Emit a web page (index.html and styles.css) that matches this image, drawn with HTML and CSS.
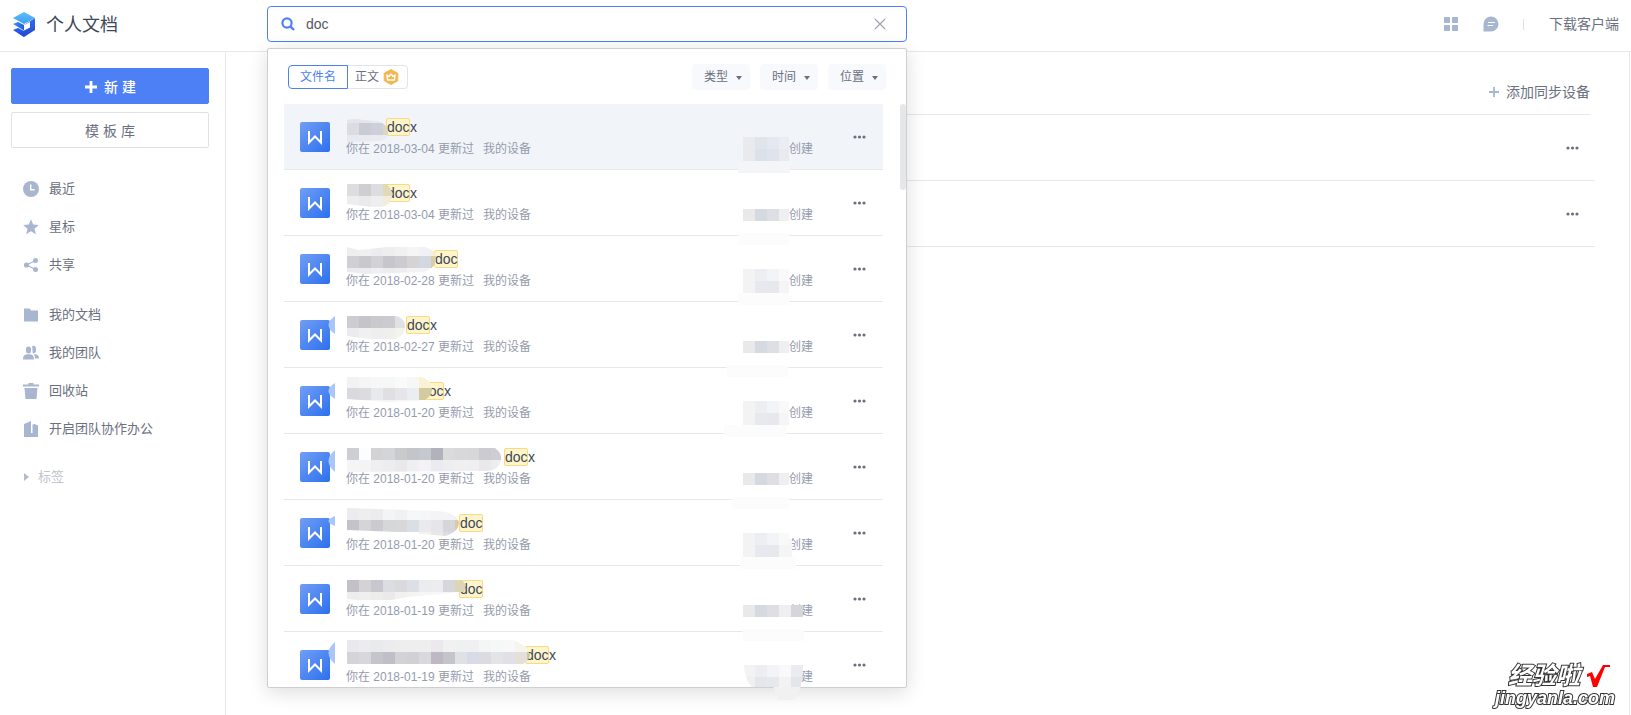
FILE: index.html
```html
<!DOCTYPE html>
<html lang="zh-CN">
<head>
<meta charset="utf-8">
<meta name="viewport" content="width=device-width, initial-scale=1">
<title>个人文档</title>
<link rel="stylesheet" href="styles.css">
</head>
<body>
<header class="header">
  <a class="brand" href="#">
    <svg class="brand-logo" viewBox="0 0 24 26" aria-hidden="true">
      <defs>
        <linearGradient id="g-top" x1="0" y1="0" x2="0" y2="1"><stop offset="0" stop-color="#5cc0fd"/><stop offset="1" stop-color="#3d9cf5"/></linearGradient>
        <linearGradient id="g-side" x1="0" y1="0" x2="0" y2="1"><stop offset="0" stop-color="#3469f5"/><stop offset="1" stop-color="#2348cf"/></linearGradient>
        <linearGradient id="g-mid" x1="0" y1="0" x2="1" y2="0"><stop offset="0" stop-color="#3f93fa"/><stop offset="1" stop-color="#1c5be8"/></linearGradient>
      </defs>
      <path d="M1 19l5-2 6 3v6z" fill="#2458f0"/>
      <path d="M12 14l11-7v12l-11 7-6-4 6-2z" fill="url(#g-side)"/>
      <path d="M1 13l5-2 6 3v5.500z" fill="url(#g-mid)"/>
      <path d="M1 7l11-6 11 6-11 6z" fill="url(#g-top)"/>
      <path d="M12 14l6-3v5.500l-6 3z" fill="#fff"/>
    </svg>
    <span class="brand-name">个人文档</span>
  </a>
  <div class="search">
    <form class="search-box" role="search">
      <svg class="search-icon" viewBox="0 0 14 14" aria-hidden="true"><circle cx="6" cy="6" r="4.600" fill="none" stroke="#4d80f4" stroke-width="2.200"/><path d="M9.300 9.300L13 13" stroke="#4d80f4" stroke-width="2.400"/></svg>
      <input class="search-input" type="text" value="doc" aria-label="搜索文档">
      <button class="icon-button" type="button" aria-label="清除">
        <svg class="clear-icon" viewBox="0 0 12 12"><path d="M1 1l10 10M11 1L1 11" stroke="#9a9fab" stroke-width="1.100"/></svg>
      </button>
    </form>
    <section class="panel" aria-label="搜索结果">
      <div class="panel-bar">
        <div class="tabs">
          <button class="tab tab-active" type="button">文件名</button>
          <button class="tab" type="button">正文
            <svg class="crown" viewBox="0 0 16 16" aria-hidden="true"><path d="M8 .5l6.800 3.800v7.400L8 15.500l-6.800-3.800V4.300z" fill="#f3b750" stroke="#f3b750" stroke-linejoin="round"/><path d="M3.800 6l2.200 1.600L8 5l2 2.600L12.200 6l-.8 5H4.600z" fill="none" stroke="#fff" stroke-width="1.300" stroke-linejoin="round"/></svg>
          </button>
        </div>
        <div class="filters">
          <span class="filter"><select aria-label="类型"><option>类型</option></select></span>
          <span class="filter"><select aria-label="时间"><option>时间</option></select></span>
          <span class="filter"><select aria-label="位置"><option>位置</option></select></span>
        </div>
      </div>
      <div class="results-view">
        <ul class="results" id="results"></ul>
        <span class="scroll-thumb"></span>
      </div>
      <svg class="panel-smudge" viewBox="0 0 28 14" aria-hidden="true"><path d="M0 0h28l-4 11q-2 3-5 3H5z" fill="#f1f1f1"/></svg>
    </section>
  </div>
  <div class="header-tools">
    <button class="icon-button" type="button" aria-label="应用">
      <svg class="tool-icon" viewBox="0 0 16 16" fill="#a8b6d0"><rect x="1" y="1" width="6" height="6" rx=".6"/><rect x="9" y="1" width="6" height="6" rx=".6"/><rect x="1" y="9" width="6" height="6" rx=".6"/><rect x="9" y="9" width="6" height="6" rx=".6"/></svg>
    </button>
    <button class="icon-button" type="button" aria-label="消息">
      <svg class="tool-icon" viewBox="0 0 16 16"><path d="M8 .5A7.500 7.500 0 1 1 8 15.500H.5V8A7.500 7.500 0 0 1 8 .5z" fill="#a8b6d0"/><path d="M5 6.500h7M4.500 9.500h5.500" stroke="#fff" stroke-width="1.200"/></svg>
    </button>
    <span class="divider"></span>
    <a class="download" href="#">下载客户端</a>
  </div>
</header>
<div class="body">
  <aside class="sidebar">
    <button class="side-button side-primary" type="button">
      <svg class="plus" viewBox="0 0 14 14" aria-hidden="true"><path d="M7 1v12M1 7h12" stroke="#fff" stroke-width="2.800"/></svg>
      新 建
    </button>
    <button class="side-button" type="button">模 板 库</button>
    <nav class="nav">
      <ul class="nav-group">
        <li><a class="nav-link" href="#"><svg viewBox="0 0 16 16"><circle cx="8" cy="8" r="8"/><path d="M7.700 3.500v5.200h4" fill="none" stroke="#fff" stroke-width="1.500"/></svg>最近</a></li>
        <li><a class="nav-link" href="#"><svg viewBox="0 0 16 16"><path d="M8 .3l2.200 5.300 5.600.4-4.300 3.700 1.400 5.600L8 12.300l-4.900 3 1.400-5.600L.2 6l5.600-.4z"/></svg>星标</a></li>
        <li><a class="nav-link" href="#"><svg viewBox="0 0 16 16"><circle cx="3.500" cy="8" r="2.600"/><circle cx="12.500" cy="3.500" r="2.500"/><circle cx="12.500" cy="12.500" r="2.500"/><path d="M12.500 3.500L3.500 8l9 4.500" fill="none" stroke="#a8b6d0" stroke-width="1.200"/></svg>共享</a></li>
      </ul>
      <ul class="nav-group">
        <li><a class="nav-link" href="#"><svg viewBox="0 0 16 16"><path d="M1 1.500h5.500L8 3.500h7v11H1z"/></svg>我的文档</a></li>
        <li><a class="nav-link" href="#"><svg viewBox="0 0 16 16"><rect x="3" y="1.500" width="5" height="7" rx="2.500"/><path d="M9 1.300c1-1 4-.6 4 2.200v2c0 2-1.500 3.200-3.200 2.700C9.300 7 9.800 3 9 1.300z"/><path d="M0 14.500c0-4 2-5.200 5.500-5.200S11 10.500 11 14.500zM10.500 9.300c3.500-.3 5.500 1 5.500 4.200h-4c0-2-.3-3-1.500-4.200z"/></svg>我的团队</a></li>
        <li><a class="nav-link" href="#"><svg viewBox="0 0 16 16"><path d="M5.500 0h5v1.500H16v2H0v-2h5.500zM1.500 5h13l-1 11h-11z"/></svg>回收站</a></li>
        <li><a class="nav-link" href="#"><svg viewBox="0 0 16 16"><path d="M1 3l7-3v12h1.500V3.500L11 3.200v-.5l4 1.800V16H1z"/></svg>开启团队协作办公</a></li>
      </ul>
      <a class="nav-tags" href="#"><svg viewBox="0 0 6 10" aria-hidden="true"><path d="M0 1l5 4-5 4z"/></svg>标签</a>
    </nav>
  </aside>
  <main class="main">
    <div class="main-bar">
      <button class="add-device" type="button"><svg viewBox="0 0 12 12" aria-hidden="true"><path d="M6 1v10M1 6h10" stroke="#a8b6d0" stroke-width="1.800"/></svg>添加同步设备</button>
    </div>
    <ul class="devices">
      <li class="device"><button class="icon-button" type="button" aria-label="更多"><svg class="dots" viewBox="0 0 14 4"><circle cx="2" cy="2" r="1.600"/><circle cx="6.500" cy="2" r="1.600"/><circle cx="11" cy="2" r="1.600"/></svg></button></li>
      <li class="device"><button class="icon-button" type="button" aria-label="更多"><svg class="dots" viewBox="0 0 14 4"><circle cx="2" cy="2" r="1.600"/><circle cx="6.500" cy="2" r="1.600"/><circle cx="11" cy="2" r="1.600"/></svg></button></li>
    </ul>
  </main>
</div>
<div class="watermark">
  <div class="watermark-top"><span>经验啦</span><svg viewBox="0 0 24 24" aria-hidden="true"><path d="M1 10l5-2 3 7L17 1h7v2h-5L11 23H7L4 12l-3 1z" fill="#f00"/></svg></div>
  <div class="watermark-url">jingyanla.com</div>
</div>
<script src="app.js"></script>
</body>
</html>
```
FILE: styles.css
```css
* { box-sizing: border-box; }

body {
  margin: 0;
  min-height: 100vh;
  display: flex;
  flex-direction: column;
  background: #fff;
  color: #6a7080;
  font: 14px/18px "Liberation Sans", "Noto Sans CJK SC", sans-serif;
  overflow: hidden;
}

button, input, select { font: inherit; color: inherit; }
ul { list-style: none; margin: 0; padding: 0; }
a { color: inherit; text-decoration: none; }
svg { display: block; flex: none; }

.icon-button {
  display: flex;
  padding: 0;
  border: 0;
  background: none;
}

/* Header */
.header {
  display: flex;
  height: 52px;
  border-bottom: 1px solid #e7e8ea;
}

.brand {
  display: flex;
  flex: none;
  align-items: center;
  gap: 10px;
  width: 267px;
  padding: 0 0 3px 12px;
}
.brand-logo { width: 24px; height: 26px; }
.brand-name { padding-top: 2px; color: #3d4757; font-size: 18px; line-height: 24px; }

.search {
  position: relative;
  flex: 0 1 640px;
  padding-top: 6px;
}
.search-box {
  display: flex;
  align-items: center;
  height: 36px;
  padding: 0 20px 0 13px;
  border: 1px solid #4d80f4;
  border-radius: 4px;
}
.search-icon { width: 14px; height: 14px; }
.search-input {
  flex: 1;
  min-width: 0;
  padding: 0 0 0 11px;
  border: 0;
  outline: 0;
  background: none;
  color: #555a64;
}
.clear-icon { width: 12px; height: 12px; }

.header-tools {
  display: flex;
  align-items: center;
  gap: 24px;
  margin-left: auto;
  padding: 0 12px 3px 0;
}
.tool-icon { width: 16px; height: 16px; }
.divider { width: 1px; height: 11px; margin-right: 1px; background: #dde2ea; }
.download { line-height: 20px; }

/* Search panel */
.panel {
  position: absolute;
  z-index: 2;
  top: 48px;
  left: 0;
  right: 0;
  background: #fff;
  border: 1px solid #cfcfd1;
  border-radius: 2px;
  box-shadow: 0 4px 20px rgba(0, 0, 0, .14);
}
.panel-bar {
  display: flex;
  justify-content: space-between;
  align-items: center;
  height: 55px;
  padding: 0 20px;
  font-size: 12px;
}
.tabs, .filters { display: flex; }
.tab {
  display: flex;
  align-items: center;
  gap: 4px;
  height: 24px;
  padding: 0 8px 0 7px;
  border: 1px solid #e3e4e6;
  border-left: 0;
  border-radius: 0 4px 4px 0;
  background: #fff;
}
.tab-active {
  padding: 0 11px;
  border: 1px solid #4d80f4;
  border-radius: 4px 0 0 4px;
  color: #4d80f4;
}
.crown { width: 16px; height: 16px; }
.filters { gap: 10px; }
.filter { position: relative; display: flex; }
.filter select {
  appearance: none;
  width: 58px;
  height: 26px;
  padding: 0 20px 0 12px;
  border: 0;
  border-radius: 4px;
  background: #f7f9fc;
}
.filter::after {
  content: "";
  position: absolute;
  right: 8px;
  top: 12px;
  border: 3px solid transparent;
  border-top: 4px solid #6a7080;
  border-bottom: 0;
}

.results-view { position: relative; padding: 0 23px 0 16px; max-height: 583px; overflow: hidden; }
.scroll-thumb {
  position: absolute;
  top: 0;
  right: 0;
  width: 6px;
  height: 86px;
  border-radius: 3px;
  background: #e6e7e9;
}
.panel-smudge { position: absolute; bottom: -13px; right: 105px; width: 28px; height: 14px; }

.result {
  display: flex;
  align-items: center;
  height: 66px;
  padding: 0 16px;
  border-bottom: 1px solid #e7e8ea;
}
.result-active { background: #f1f5fa; }
.file-icon { width: 30px; height: 30px; }
.file-text { flex: 1; margin-left: 16px; padding-top: 3px; }
.file-name { display: flex; height: 18px; margin: 0 0 4px 1px; color: #3d4757; }
.file-name mark {
  width: 24px;
  border: 1px solid #fbd980;
  border-radius: 2px;
  background: #fff5cc;
  color: inherit;
  line-height: 16px;
}
.file-meta { display: flex; gap: 9px; color: #959bac; font-size: 12px; }
.owner { display: flex; align-self: flex-end; margin: 0 40px 11px 0; color: #959bac; font-size: 12px; }
.mosaic { position: relative; z-index: 1; height: 18px; overflow: visible; }
.dots { width: 14px; height: 4px; fill: #6a7080; }

/* Page body */
.body { display: flex; flex: 1; }

.sidebar {
  flex: none;
  width: 226px;
  padding: 16px 16px 0 11px;
  border-right: 1px solid #e7e8ea;
}
.side-button {
  display: flex;
  align-items: center;
  justify-content: center;
  gap: 6px;
  width: 100%;
  height: 36px;
  margin-bottom: 8px;
  padding-top: 2px;
  border: 1px solid #e1e2e4;
  border-radius: 2px;
  background: #fff;
}
.side-primary { border-color: #4d80f4; background: #4d80f4; color: #fff; font-weight: 500; }
.plus { width: 14px; height: 14px; }

.nav { padding: 14px 0 0 12px; font-size: 13px; }
.nav-group { margin-bottom: 12px; }
.nav-link { display: flex; align-items: center; gap: 10px; height: 38px; }
.nav-link svg { width: 16px; height: 16px; fill: #a8b6d0; }
.nav-tags { display: flex; align-items: center; gap: 8px; height: 34px; color: #c0c4cd; }
.nav-tags svg { width: 6px; height: 10px; margin-left: 1px; fill: #b5bcc9; }

.main {
  flex: 1;
  margin-right: 1px;
  padding: 0 34px 0 41px;
  border-right: 1px solid #e7e8ea;
}
.main-bar {
  display: flex;
  justify-content: flex-end;
  height: 63px;
  margin-right: 5px;
  padding-top: 18px;
  border-bottom: 1px solid #e7e8ea;
}
.add-device {
  display: flex;
  align-items: center;
  gap: 6px;
  height: 44px;
  padding: 0;
  border: 0;
  background: none;
}
.add-device svg { width: 12px; height: 12px; }
.device {
  display: flex;
  align-items: center;
  justify-content: flex-end;
  height: 66px;
  padding-right: 15px;
  border-bottom: 1px solid #e7e8ea;
}

/* Watermark */
.watermark {
  position: fixed;
  right: 16px;
  bottom: 7px;
  z-index: 3;
  color: #fff;
  font-weight: 700;
  font-style: italic;
  -webkit-text-stroke: 2px #333;
  paint-order: stroke fill;
}
.watermark-top {
  display: flex;
  align-items: center;
  justify-content: flex-end;
  gap: 6px;
  padding-right: 5px;
  font-size: 24px;
  line-height: 24px;
}
.watermark-top svg { width: 24px; height: 24px; }
.watermark-url { font-size: 18px; line-height: 20px; }
```
FILE: app.js
```js
// Each strip: [x, y, height, colours, last cell width]. Cells are 12px wide.
const CELL = 12;
const files = [
  { ext: "x", date: "2018-03-04", width: 39,
    edge: "M0 2Q8 0 16 2L30 3Q40 5 41 14Q42 21 34 23L0 24z",
    strips: [[0, 1, 4, "e2e5ea e2e5ea e6eaf0 e9edf2"], [0, 5, 12, "dadce2 c9ccd4 cbd0da dcd7c2"], [0, 17, 7, "e6e9ef e8eaf0 e9ebf1 eaecf1"]] },
  { ext: "x", date: "2018-03-04", width: 39,
    edge: "M0 0H40Q46 6 45 13Q43 22 34 23H24L0 20z",
    strips: [[0, 0, 12, "dddde0 cfcfd2 dcdde1 e2dab6"], [0, 12, 12, "ededf0 eaeaed eeeef0 f1edd9"]] },
  { ext: "", date: "2018-02-28", width: 87,
    edge: "M0-3L12 0L40-3H78Q90 0 89 10Q87 20 76 22L20 24L0 22z",
    strips: [[0, -4, 10, "eeeeef f0f0f1 ebecee eeeeef f1f1f2 f5f5f6 eff1f7 f5efd8"], [0, 6, 12, "d0cfd3 c9c8cd d2d2d6 c7c6cc cccbd0 d6d3d5 d3d7e2 d8cda3"], [0, 18, 6, "ebebed ededef f0f0f2 ececee eeeeef f3f3f5 f3f3f5"]] },
  { ext: "x", date: "2018-02-27", width: 59, tint: [0, 18],
    edge: "M0 0H50Q58 3 58 10Q58 20 48 23H22L0 20z",
    strips: [[0, 0, 12, "cdcdd1 c4c4ca cacacd cbcbd1 dfe2e0"], [0, 12, 12, "ebebee f0f0f2 eeeeef efefee f3f3ee"]] },
  { ext: "x", date: "2018-01-20", width: 73, tint: [1, 16],
    edge: "M0-5H74Q85-2 85 8Q84 17 74 19L40 20L0 17z",
    strips: [[0, -6, 12, "f2f2f4 f5f5f6 f7f7f8 f6f7f7 f9fafa f7f7f6 faf3d3 faf3d3"], [0, 6, 12, "dad9dd dcdbdf e8e9ed e0e0e2 e6e6ea ebeef0 d3caa0 d3caa0"], [0, 18, 3, "f4f4f4 f4f4f4 f4f4f4 f4f4f4 f6f6f6 f6f6f6"]] },
  { ext: "x", date: "2018-01-20", width: 157, tint: [2, 22],
    edge: "M0 0H148Q155 5 154 12Q152 22 140 23L0 24z",
    strips: [[0, 0, 12, "cfcfd3 fbfdfe d3d3d6 d4d5d8 cac9cc c4c4cb c5c9cf b2b2bc dad9dc d8d8db d7d7da cccbd1 cecdd3 e9e9ec"], [0, 12, 12, "f5f5f6 f4f4f6 efeff1 ededf0 e9e9eb efeff1 f3f3f5 ebebef eeeef0 f0f0f2 efeff1 e9e9ec ededf0"]] },
  { ext: "", date: "2018-01-20", width: 112, tint: [2, 10],
    edge: "M0-6L90-3Q108-2 112 8Q112 18 98 22L50 18L0 16z",
    strips: [[0, -6, 12, "ececee eeeef0 ececef f4f4f5 eff1f4 f6f8f8 f5f7f6 f4f4f5 f3f4f7 f3efdf"], [0, 6, 12, "c4c3c9 d6d4d7 cbcad0 d6d7d9 d8d8d9 dadfe5 e9e9ee e6e6ea d5d5da d6cca8"], [72, 18, 4, "f2f2f3 e8e8eb dddde1"]] },
  { ext: "", date: "2018-01-19", width: 112,
    edge: "M0 0H114Q121 4 117 12L60 17Q40 23 0 19z",
    strips: [[0, 0, 12, "c3c1c8 d4d2d5 c8c7cd dcdde2 dad9db dcdfe5 ebecef ededf0 d6d7dd ddd6b6"], [0, 12, 8, "ededee efefef ededee eaeaeb f1f1f1 f4f4f4 f6f6f6 f6f6f6 f6f6f6"]] },
  { ext: "x", date: "2018-01-19", width: 178, tint: [-4, 22],
    edge: "M0-6H166Q182 0 183 10Q180 19 168 20L0 18z",
    strips: [[0, -6, 12, "e9e9ec ececee e9eaec ececee ededee eeeeef eeeeef ebe9ed f1f1f2 eff0f2 f0f0f2 f4f5f5 f6f8f7 f7f8f7 f6f4ee f6f4e9"], [0, 6, 12, "d4d3d8 d8d7dc c7c5cc c0bfc7 d3d2d7 d1d0d5 d9d8dc beb8c5 c4c4ca e0e1e3 d8dae5 dcdbe1 e3e4e6 e0e0e6 e5dfd9 d0c79d"]] },
];

const single = [[0, 3, 12, "e9e9ea d5d9e0 dedfe5 efeff1", 10]];
const double = [[0, -3, 12, "f3f3f4 edeef1 f3f4f7 f9f9fa", 10], [0, 9, 12, "f3f3f4 e7e9ef e7e8ee f5f5f6", 10]];
const owners = [
  { strips: [[0, -3, 12, "e8eaee e0e4eb e4e8ef eaedf3", 10], [0, 9, 12, "e8eaee dce1e9 dfe3ec e8eaf0", 10]], patch: [-5, 21, 52, "f3f5f9"] },
  { strips: single, patch: [-5, 27, 51] },
  { strips: double, patch: [-5, 21, 51] },
  { strips: single, patch: [-16, 27, 61] },
  { strips: double, patch: [-19, 21, 62] },
  { strips: single, patch: [-11, 27, 57] },
  { strips: double, patch: [-3, 21, 56], extra: ["f5f5f6", 46, 3, 3, 18] },
  { strips: [[0, 3, 12, "e9e9ea d5d9e0 dedfe5 efeff1 d5d5db"]], patch: [0, 27, 61] },
  { strips: [[0, -3, 12, "f3f3f4 edeef1 f3f4f7 f9f9fa ebecef"], [0, 9, 12, "f0f0f1 e4e6ec e7e8ee f2f2f3 e3e5ea"]], patch: [8, 21, 50, "f3f3f4"], round: true },
];

function cells(strips) {
  return strips.map(([x, y, h, colours, last]) => {
    const list = colours.split(" ");
    return list.map((c, i) => {
      const w = last && i === list.length - 1 ? last : CELL;
      return `<rect x="${x + i * CELL}" y="${y}" width="${w}" height="${h}" fill="#${c}"/>`;
    }).join("");
  }).join("");
}

function nameMosaic(f, i) {
  const tint = f.tint
    ? `<path d="M-12 ${f.tint[0]}q-13 ${f.tint[1] / 2} 0 ${f.tint[1]}z" fill="#a9c6f9"/>` : "";
  return `<svg class="mosaic" width="${f.width}" height="18" aria-hidden="true">
    <clipPath id="edge${i}"><path d="${f.edge}"/></clipPath>${tint}
    <g clip-path="url(#edge${i})">${cells(f.strips)}</g></svg>`;
}

function ownerMosaic(o, i) {
  const [px, py, pw, pc = "fcfcfc"] = o.patch;
  const extra = o.extra
    ? `<rect x="${o.extra[1]}" y="${o.extra[2]}" width="${o.extra[3]}" height="${o.extra[4]}" fill="#${o.extra[0]}"/>` : "";
  const clip = o.round
    ? `<clipPath id="own${i}"><path d="M1-3H60Q60 10 57 21H30V24H18Q2 20 1-3z"/></clipPath>` : "";
  return `<svg class="mosaic" width="46" height="18" aria-hidden="true">${clip}
    <g ${o.round ? `clip-path="url(#own${i})"` : ""}>${cells(o.strips)}${extra}<rect x="${px}" y="${py}" width="${pw}" height="12" fill="#${pc}"/></g></svg>`;
}

document.getElementById("results").innerHTML = files.map((f, i) => `
  <li class="result${i === 0 ? " result-active" : ""}">
    <svg class="file-icon" viewBox="0 0 30 30" aria-hidden="true">
      <defs><linearGradient id="doc${i}" x1="0" y1="0" x2="1" y2="1"><stop offset="0" stop-color="#719ef5"/><stop offset="1" stop-color="#2c70ee"/></linearGradient></defs>
      <rect width="30" height="30" rx="2" fill="url(#doc${i})"/>
      <path d="M9 9v11.500l6-6 6 6V9" fill="none" stroke="#fff" stroke-width="2"/>
    </svg>
    <div class="file-text">
      <div class="file-name">${nameMosaic(f, i)}<mark>doc</mark>${f.ext}</div>
      <div class="file-meta"><span>你在 ${f.date} 更新过</span><span>我的设备</span></div>
    </div>
    <div class="owner">${ownerMosaic(owners[i], i)}<span>创建</span></div>
    <button class="icon-button" type="button" aria-label="更多"><svg class="dots" viewBox="0 0 14 4"><circle cx="2" cy="2" r="1.600"/><circle cx="6.500" cy="2" r="1.600"/><circle cx="11" cy="2" r="1.600"/></svg></button>
  </li>`).join("");
```
